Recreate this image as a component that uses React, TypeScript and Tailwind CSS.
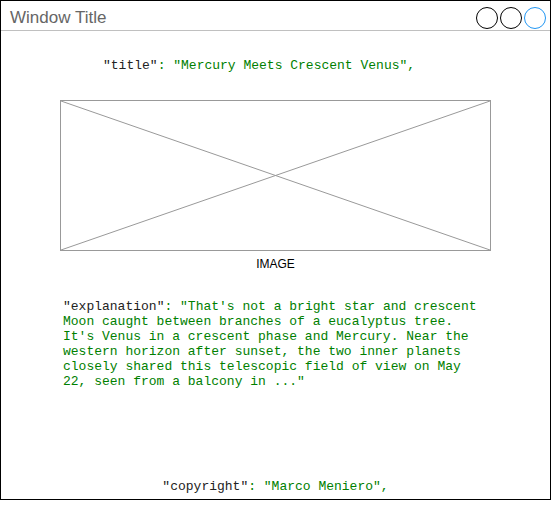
const mono = { fontFamily: '"Liberation Mono", "Courier New", monospace' };

function Key({ k }: { k: string }) {
  return <span className="text-[#222]">"{k}"</span>;
}

export default function App() {
  return (
    <div className="h-[507px] w-[551px] bg-white">
      <div className="flex h-[500px] w-[551px] flex-col border border-black">
        {/* Title bar */}
        <div className="flex h-[30px] shrink-0 items-center justify-between border-b border-[#c0c0c0] pt-[4px] pl-[9px] pr-[4px]">
          <span className="font-['Liberation_Sans',Arial,sans-serif] text-[17px] text-[#666]">Window Title</span>
          <div className="flex gap-[2px]">
            <div className="h-[22px] w-[22px] rounded-full border border-black" />
            <div className="h-[22px] w-[22px] rounded-full border border-black" />
            <div className="h-[22px] w-[22px] rounded-full border border-[#2196f3]" />
          </div>
        </div>

        <div className="flex flex-1 flex-col text-[13px] leading-[15px]" style={mono}>
          <div className="mt-[27px] pl-[102px] text-[#008000]">
            <Key k="title" />: "Mercury Meets Crescent Venus",
          </div>

          {/* Image placeholder */}
          <div className="mt-[27px] ml-[59px] flex w-[431px] flex-col items-center">
            <div className="h-[151px] w-[431px] border border-[#999]">
              <svg width="429" height="149" className="block">
                <line x1="0" y1="0" x2="429" y2="149" stroke="#999" strokeWidth="1" />
                <line x1="429" y1="0" x2="0" y2="149" stroke="#999" strokeWidth="1" />
              </svg>
            </div>
            <span className="mt-[6px] font-['Liberation_Sans',Arial,sans-serif] text-[12px] leading-[14px] text-black">IMAGE</span>
          </div>

          <div className="mt-[28px] ml-[62px] w-[420px] text-[#008000]">
            <Key k="explanation" />: "That's not a bright star and crescent Moon caught between branches of a eucalyptus tree. It's Venus in a crescent phase and Mercury. Near the western horizon after sunset, the two inner planets closely shared this telescopic field of view on May 22, seen from a balcony in ..."
          </div>

          <div className="mt-auto mb-[5px] text-center text-[#008000]">
            <Key k="copyright" />: "Marco Meniero",
          </div>
        </div>
      </div>
    </div>
  );
}
